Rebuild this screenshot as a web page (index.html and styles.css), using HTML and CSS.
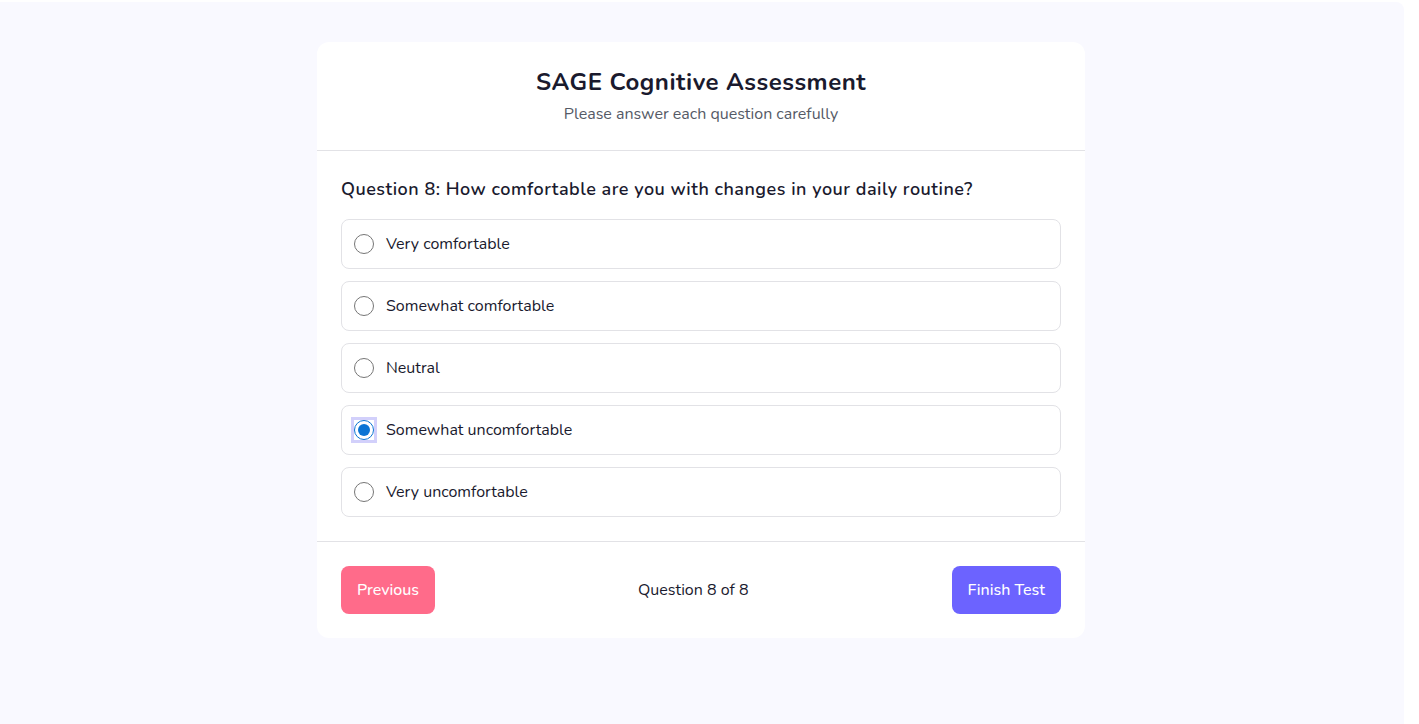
FILE: index.html
```html
<!DOCTYPE html>
<html lang="en">
<head>
<meta charset="utf-8">
<title>SAGE Cognitive Assessment</title>
<link rel="stylesheet" href="styles.css">
</head>
<body>
<div class="app">
  <div class="card">
    <header class="card-header">
      <h1 class="title">SAGE Cognitive Assessment</h1>
      <p class="subtitle">Please answer each question carefully</p>
    </header>
    <section class="card-body">
      <h2 class="question">Question 8: How comfortable are you with changes in your daily routine?</h2>
      <div class="options">
        <label class="option"><input type="radio" name="q8"><span>Very comfortable</span></label>
        <label class="option"><input type="radio" name="q8"><span>Somewhat comfortable</span></label>
        <label class="option"><input type="radio" name="q8"><span>Neutral</span></label>
        <label class="option"><input type="radio" name="q8" class="focused" checked><span>Somewhat uncomfortable</span></label>
        <label class="option"><input type="radio" name="q8"><span>Very uncomfortable</span></label>
      </div>
    </section>
    <footer class="card-footer">
      <button class="btn btn-prev">Previous</button>
      <span class="progress">Question 8 of 8</span>
      <button class="btn btn-finish">Finish Test</button>
    </footer>
  </div>
</div>
</body>
</html>
```

FILE: styles.css
```css
html, body {
  margin: 0;
  padding: 0;
  background: #ffffff;
}
body {
  font-family: "Nunito", "Lato", "Open Sans", sans-serif;
  color: #1a1a2e;
}
.app {
  margin-top: 2px;
  margin-right: 15px;
  height: 722px;
  background: #f9f9ff;
  border-radius: 0 8px 0 0;
  padding: 40px 2px 0 0;
  box-sizing: border-box;
}
.card {
  width: 768px;
  margin: 0 auto;
  background: #ffffff;
  border-radius: 12px;
  overflow: hidden;
}
.card-header {
  padding: 24px 24px 24px;
  text-align: center;
  border-bottom: 1px solid #e2e2e6;
}
.title {
  margin: 0;
  font-size: 24px;
  line-height: 32px;
  font-weight: 700;
  letter-spacing: 0.5px;
  color: #1a1a2e;
}
.subtitle {
  margin: 4px 0 0;
  font-size: 16px;
  line-height: 24px;
  color: #555a66;
}
.card-body {
  padding: 24px;
  border-bottom: 1px solid #e2e2e6;
}
.question {
  margin: 0 0 16px;
  font-size: 18px;
  line-height: 28px;
  font-weight: 600;
  letter-spacing: 0.5px;
  color: #1a1a2e;
}
.options {
  display: flex;
  flex-direction: column;
  gap: 12px;
}
.option {
  display: flex;
  align-items: center;
  gap: 12px;
  height: 50px;
  box-sizing: border-box;
  padding: 0 12px;
  border: 1px solid #e2e2e6;
  border-radius: 8px;
  font-size: 16px;
  color: #1a1a2e;
}
.option input {
  margin: 0;
  width: 20px;
  height: 20px;
  accent-color: #0a74d4;
}
.option input.focused {
  outline: 3px solid #d2d0fb;
  outline-offset: 0;
}
.card-footer {
  display: flex;
  align-items: center;
  justify-content: space-between;
  padding: 24px;
}
.btn {
  height: 48px;
  padding: 0 16px;
  border: none;
  border-radius: 8px;
  color: #ffffff;
  font-family: inherit;
  font-size: 16px;
  font-weight: 500;
}
.btn-prev {
  background: #ff6b8a;
}
.btn-finish {
  background: #6c63ff;
}
.progress {
  font-size: 16px;
  color: #1a1a2e;
}
```
